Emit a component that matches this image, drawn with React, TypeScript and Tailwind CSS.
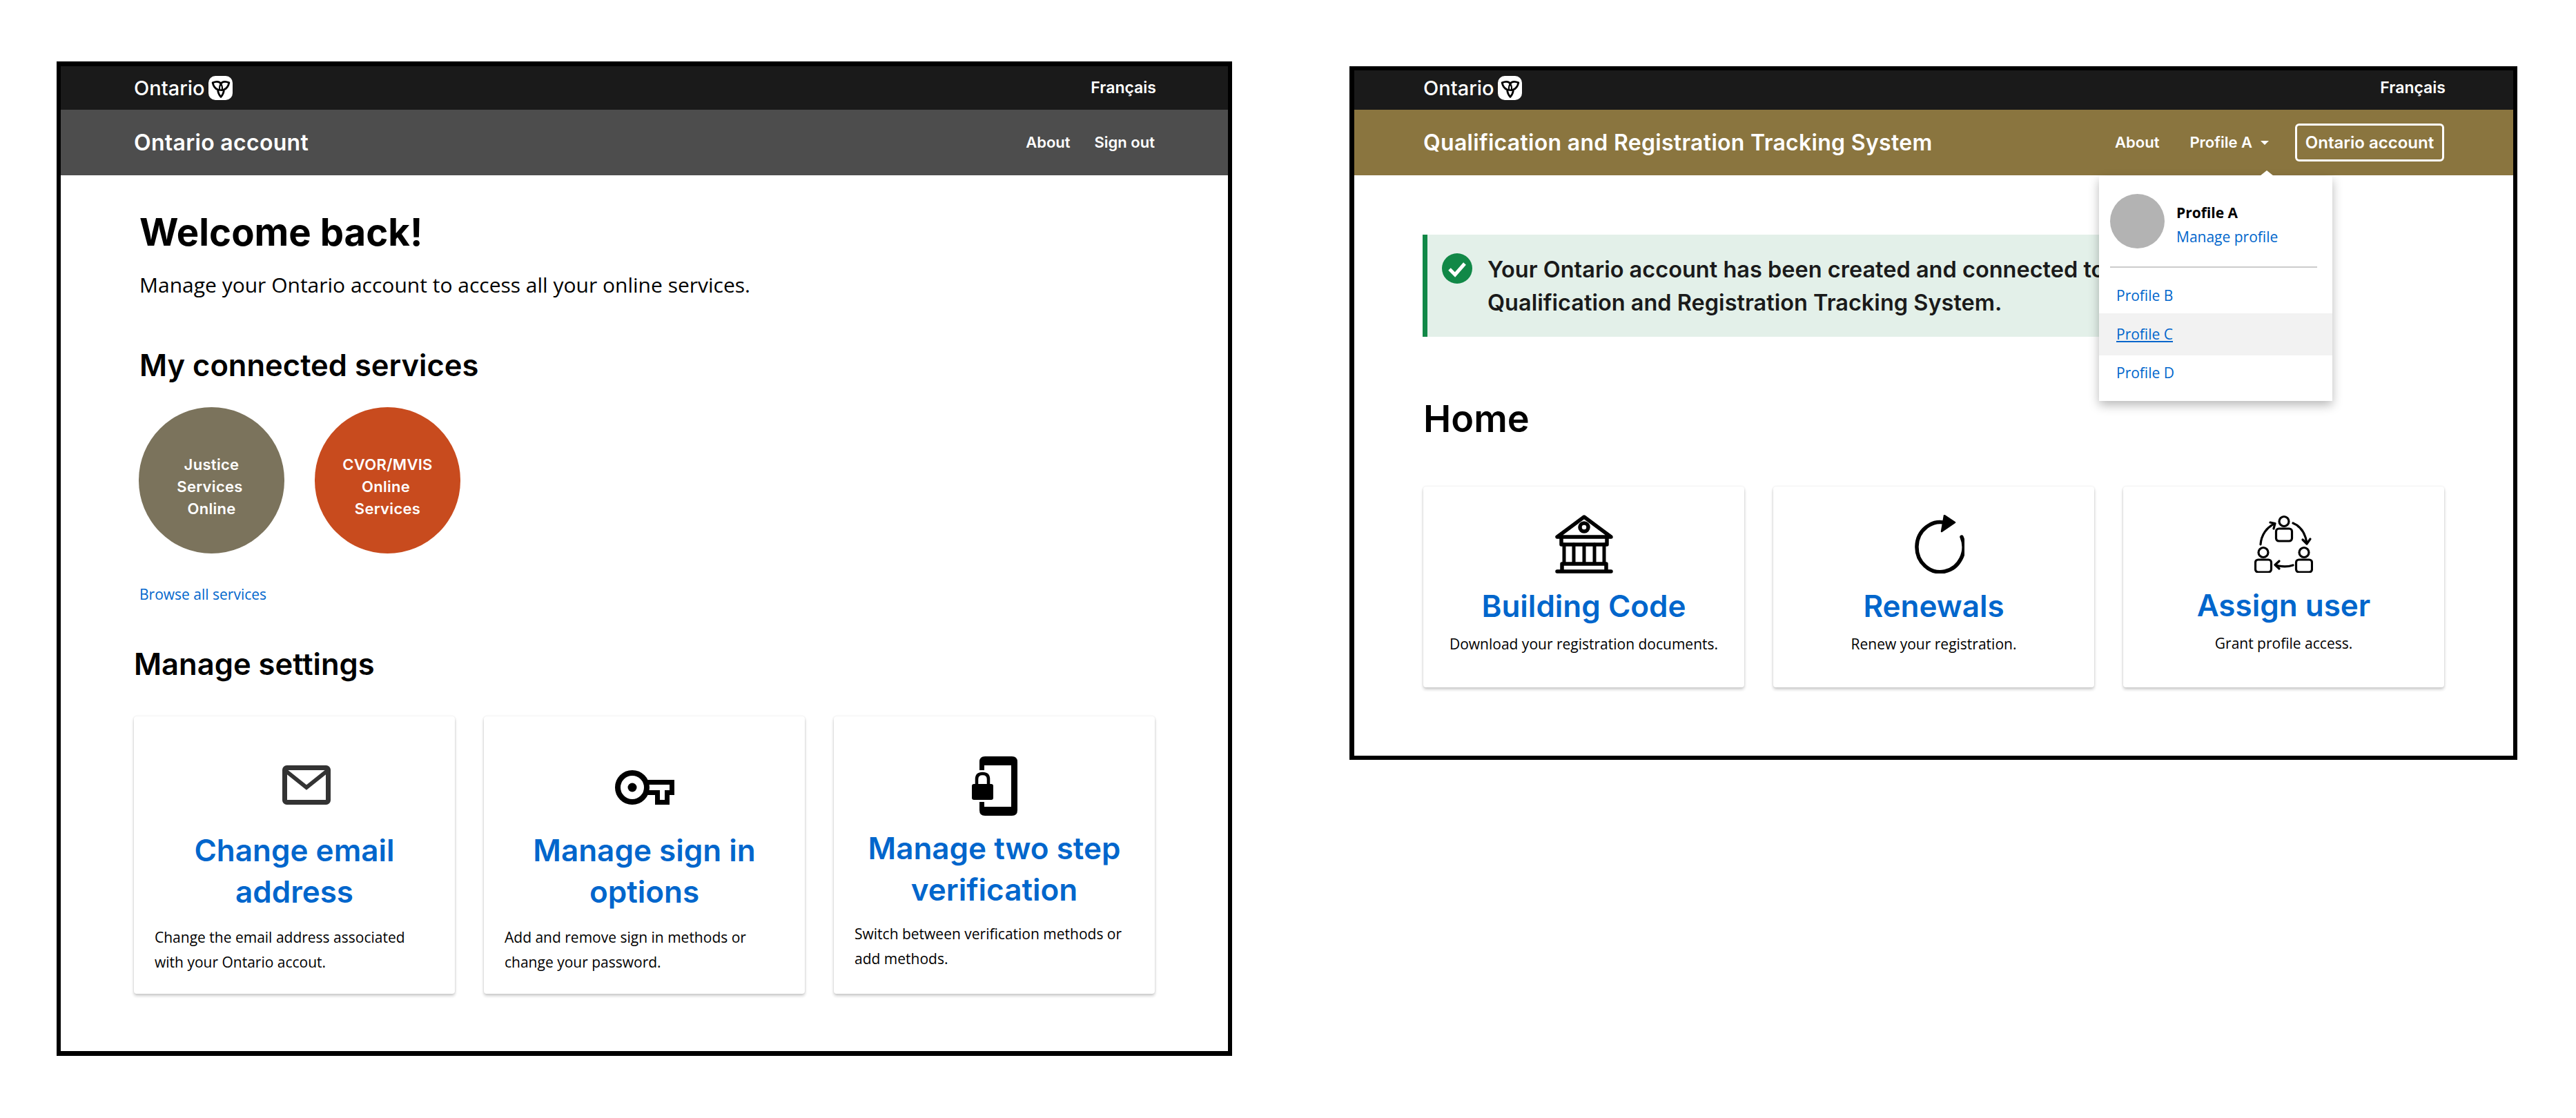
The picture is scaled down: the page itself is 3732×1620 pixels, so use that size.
import type { ReactNode } from 'react'

const headingFont = "font-['Inter','Liberation_Sans',sans-serif]"
const body = "font-['Open_Sans',sans-serif]"

function Logo() {
  return (
    <div className="flex items-center gap-[10px]">
      <span className="w-[98px] text-[29px] leading-none font-medium whitespace-nowrap text-white font-['Inter',sans-serif]">Ontario</span>
      <div className="flex h-[35px] w-[35px] items-center justify-center rounded-[10px] bg-white">
        <svg viewBox="0 0 24 24" className="h-[30px] w-[30px]" fill="none" stroke="#000" strokeWidth="2.2" strokeLinejoin="round">
          <path d="M2.5 5.5C7 3.5 10 4 12 6.5C14 4 17 3.5 21.5 5.5C20.5 10 18.5 12.5 15.5 13.5C15.5 17 14 19.5 12 22C10 19.5 8.5 17 8.5 13.5C5.5 12.5 3.5 10 2.5 5.5Z" />
          <path d="M12 6.5C10.5 9 10 11 10.5 13.5C12 14.8 14 14.5 15.5 13.5M12 6.5C13.5 9 14 11 13.5 13.5M8.5 13.5C10 14.5 11 14.5 13.5 13.5" strokeWidth="1.6" />
        </svg>
      </div>
    </div>
  )
}

function TopBar({ height }: { height: string }) {
  return (
    <div className={`flex items-center justify-between bg-[#1a1a1a] ${height}`}>
      <Logo />
      <span className={`-mr-[2px] text-[23px] font-semibold text-white ${headingFont}`}>Français</span>
    </div>
  )
}

function Card({ icon, title, text, className }: { icon: ReactNode; title: ReactNode; text: ReactNode; className?: string }) {
  return (
    <div className={`flex w-[465px] flex-col items-center rounded-[4px] bg-white px-[30px] shadow-[0_3px_4px_rgba(0,0,0,0.2),0_0_3px_rgba(0,0,0,0.1)] ${className ?? ''}`}>
      {icon}
      <h3 className={`text-center text-[44px] leading-[60px] font-semibold whitespace-nowrap text-[#0066cc] ${headingFont}`}>{title}</h3>
      {text}
    </div>
  )
}

function MailIcon() {
  return (
    <svg viewBox="0 0 70 57" className="mt-[71px] mb-[36px] ml-[34px] h-[57px] w-[70px] shrink-0" fill="none" stroke="#333" strokeWidth="7">
      <rect x="3.5" y="3.5" width="63" height="50" rx="3" />
      <path d="M5 8L35 32L65 8" strokeWidth="6" />
    </svg>
  )
}

function KeyIcon() {
  return (
    <svg viewBox="0 0 86 50" className="mt-[78px] mb-[36px] h-[50px] w-[86px] shrink-0" fill="none" stroke="#000" strokeWidth="8">
      <circle cx="25" cy="25" r="21" />
      <circle cx="25" cy="25" r="6.5" fill="#000" stroke="none" />
      <path d="M44 17.5H82.5V32.5H75.5V46.5H61.5V32.5H44" strokeWidth="7" />
    </svg>
  )
}

function PhoneLockIcon() {
  return (
    <svg viewBox="0 0 66 86" className="mt-[58px] mb-[17px] h-[86px] w-[66px] shrink-0">
      <path fill="#000" d="M11 20V8Q11 0 19 0H58Q66 0 66 8V78Q66 86 58 86H19Q11 86 11 78V66H18V73H57V13H18V20Z" />
      <path fill="none" stroke="#000" strokeWidth="4.5" d="M7 42V33Q7 25 15.5 25Q24 25 24 33V42" />
      <rect x="0" y="40" width="31" height="23" rx="3" fill="#000" />
    </svg>
  )
}

function BuildingIcon() {
  return (
    <svg viewBox="0 0 84 85" className="h-[85px] w-[84px] shrink-0" fill="none" stroke="#000" strokeWidth="5.5" strokeLinecap="round" strokeLinejoin="round">
      <path d="M3 32H81L42 3Z" />
      <circle cx="42" cy="18" r="6" />
      <path d="M9 32V43H75V32" />
      <path d="M13 43V70M27 43V70M42 43V70M57 43V70M71 43V70" strokeWidth="5" />
      <path d="M10 82V71H74V82M3 82H81" />
    </svg>
  )
}

function RefreshIcon() {
  return (
    <svg viewBox="0 0 74 85" className="ml-[14px] h-[85px] w-[74px] shrink-0" fill="none" stroke="#000" strokeWidth="5.5" strokeLinecap="round" strokeLinejoin="round">
      <path d="M70 32A34 36 0 1 1 48 12" />
      <path d="M45 1L60 11L41 24Z" fill="#000" strokeWidth="2.5" />
    </svg>
  )
}

function AssignIcon() {
  const Person = ({ x, y }: { x: number; y: number }) => (
    <g transform={`translate(${x} ${y})`}>
      <circle cx="13" cy="8.5" r="7" />
      <rect x="1.5" y="19" width="23" height="18" rx="4" />
    </g>
  )
  return (
    <svg viewBox="0 0 85 84" className="h-[84px] w-[85px] shrink-0" fill="none" stroke="#000" strokeWidth="3.2" strokeLinecap="round" strokeLinejoin="round">
      <Person x={30} y={1} />
      <Person x={0} y={46} />
      <Person x={59} y={46} />
      <path d="M9 43C10 29 18 18 29 13" />
      <path d="M23 11L30 12.5L28 20" />
      <path d="M56 12C68 17 74 27 76 41" />
      <path d="M70 36L76 42L81 35" />
      <path d="M56 73C47 76 38 75 31 73" />
      <path d="M36 67L30 72.5L36 78" />
    </svg>
  )
}

function AccountFrame() {
  return (
    <div className="h-[1441px] w-[1703px] shrink-0 border-x-[6px] border-y-[7px] border-black bg-white">
      <div className="bg-[#1a1a1a] px-[106px]">
        <TopBar height="h-[63px]" />
      </div>
      <div className="flex h-[95px] items-center justify-between bg-[#4d4d4d] px-[106px]">
        <span className={`text-[32px] font-semibold tracking-[0.3px] text-white ${headingFont}`}>Ontario account</span>
        <div className={`flex gap-[35px] text-[22px] font-semibold text-white ${headingFont}`}>
          <span>About</span>
          <span>Sign out</span>
        </div>
      </div>
      <div className="px-[106px]">
        <div className="pl-[8px]">
          <h1 className={`mt-[47px] text-[54.5px] leading-[70px] font-bold text-black ${headingFont}`}>Welcome back!</h1>
          <p className={`mt-[22px] text-[30px] leading-[40px] text-black ${body}`}>Manage your Ontario account to access all your online services.</p>
          <h2 className={`mt-[66px] text-[43.5px] leading-[60px] font-semibold text-black ${headingFont}`}>My connected services</h2>
          <div className="mt-[31px] -ml-px flex gap-[44px]">
            <div className={`flex h-[212px] w-[211px] flex-col items-center justify-center rounded-full bg-[#7b735c] pt-[18px] text-center text-[22px] leading-[32px] font-semibold tracking-[0.3px] text-white ${headingFont}`}>
              <span>Justice</span>
              <span className="pr-[5px]">Services</span>
              <span>Online</span>
            </div>
            <div className={`flex h-[212px] w-[211px] flex-col items-center justify-center rounded-full bg-[#c84b1e] pt-[18px] text-center text-[22px] leading-[32px] font-semibold tracking-[0.3px] text-white ${headingFont}`}>
              <span>CVOR/MVIS</span>
              <span className="pr-[5px]">Online</span>
              <span>Services</span>
            </div>
          </div>
          <a className={`mt-[45px] block text-[21px] leading-[28px] text-[#0066cc] ${body}`}>Browse all services</a>
        </div>
        <h2 className={`mt-[57px] text-[43.5px] leading-[60px] font-semibold text-black ${headingFont}`}>Manage settings</h2>
        <div className="mt-[46px] flex gap-[42px]">
          <Card
            className="h-[402px]"
            icon={<MailIcon />}
            title={<><span className="block">Change email</span><span className="block">address</span></>}
            text={<p className={`mt-[18px] self-start text-[21px] leading-[36px] whitespace-nowrap text-black ${body}`}>Change the email address associated<br />with your Ontario accout.</p>}
          />
          <Card
            className="h-[402px]"
            icon={<KeyIcon />}
            title={<><span className="block">Manage sign in</span><span className="block">options</span></>}
            text={<p className={`mt-[18px] self-start text-[21px] leading-[36px] whitespace-nowrap text-black ${body}`}>Add and remove sign in methods or<br />change your password.</p>}
          />
          <Card
            className="h-[402px]"
            icon={<PhoneLockIcon />}
            title={<><span className="block">Manage two step</span><span className="block">verification</span></>}
            text={<p className={`mt-[16px] self-start text-[21px] leading-[36px] whitespace-nowrap text-black ${body}`}>Switch between verification methods or<br />add methods.</p>}
          />
        </div>
      </div>
    </div>
  )
}

function ProfileMenu() {
  return (
    <div className={`absolute top-[153px] left-[1079px] w-[338px] bg-white shadow-[0_6px_14px_rgba(0,0,0,0.28)] ${body}`}>
      <div className="absolute -top-[8px] left-[233px] h-0 w-0 border-x-[10px] border-b-[8px] border-x-transparent border-b-white" />
      <div className="flex items-start gap-[17px] px-[16px] pt-[26px]">
        <div className="h-[79px] w-[79px] rounded-full bg-[#b3b3b3]" />
        <div className="mt-[10px] h-[69px] text-[21px] leading-[35px]">
          <div className="font-bold text-black">Profile A</div>
          <a className="text-[#0066cc]">Manage profile</a>
        </div>
      </div>
      <div className="mx-[16px] mt-[26px] h-[2px] w-[300px] bg-[#cccccc]" />
      <a className="block h-[66px] px-[25px] pt-[25px] text-[21px] leading-[30px] text-[#0066cc]">Profile B</a>
      <a className="block h-[61px] bg-[#f2f2f2] px-[25px] pt-[15px] text-[21px] leading-[30px] text-[#0066cc] underline">Profile C</a>
      <a className="block h-[66px] px-[25px] pt-[10px] text-[21px] leading-[30px] text-[#0066cc]">Profile D</a>
    </div>
  )
}

function ServiceFrame() {
  return (
    <div className="relative mt-[7px] ml-[170px] h-[1005px] w-[1692px] shrink-0 border-[6px] border-l-[7px] border-black bg-white">
      <div className="bg-[#1a1a1a] px-[100px] pb-[6px]">
        <TopBar height="h-[51px]" />
      </div>
      <div className="flex h-[95px] items-center justify-between bg-[#8a753f] px-[100px]">
        <span className={`text-[32px] font-semibold tracking-[0.3px] text-white ${headingFont}`}>Qualification and Registration Tracking System</span>
        <div className={`flex items-center text-[22px] font-semibold text-white ${headingFont}`}>
          <span>About</span>
          <span className="ml-[44px]">Profile A</span>
          <span className="ml-[12px] h-0 w-0 border-x-[6px] border-t-[6px] border-x-transparent border-t-white" />
          <span className="ml-[38px] flex h-[55px] w-[216px] items-center justify-center rounded-[6px] border-[3px] border-white text-[24px]">Ontario account</span>
        </div>
      </div>
      <ProfileMenu />
      <div className="px-[100px]">
        <div className="mt-[86px] -ml-px flex h-[148px] w-[1230px] items-start gap-[22px] border-l-[7px] border-[#118847] bg-[#e3f0e9] pt-[27px] pl-[21px]">
          <svg viewBox="0 0 44 44" className="h-[44px] w-[44px] shrink-0">
            <circle cx="22" cy="22" r="22" fill="#118847" />
            <path d="M11 23L19 31L33 15" fill="none" stroke="#fff" strokeWidth="5" />
          </svg>
          <p className={`text-[32.5px] leading-[48px] font-semibold whitespace-nowrap text-[#1a1a1a] ${headingFont}`}>
            Your Ontario account has been created and connected to the<br />Qualification and Registration Tracking System.
          </p>
        </div>
        <h1 className={`mt-[84px] text-[54px] leading-[70px] font-semibold text-black ${headingFont}`}>Home</h1>
        <div className="mt-[63px] flex gap-[42px]">
          {[
            { icon: <BuildingIcon />, title: 'Building Code', text: 'Download your registration documents.' },
            { icon: <RefreshIcon />, title: 'Renewals', text: 'Renew your registration.' },
            { icon: <AssignIcon />, title: 'Assign user', text: 'Grant profile access.' },
          ].map((c) => (
            <Card
              key={c.title}
              className="h-[291px] pt-[41px]"
              icon={c.icon}
              title={<span className="mt-[17px] block">{c.title}</span>}
              text={<p className={`mt-[7px] text-center text-[21px] leading-[36px] whitespace-nowrap text-black ${body}`}>{c.text}</p>}
            />
          ))}
        </div>
      </div>
    </div>
  )
}

export default function App() {
  return (
    <div className="flex h-[1620px] w-[3732px] items-start bg-white pt-[89px] pl-[82px]">
      <AccountFrame />
      <ServiceFrame />
    </div>
  )
}
